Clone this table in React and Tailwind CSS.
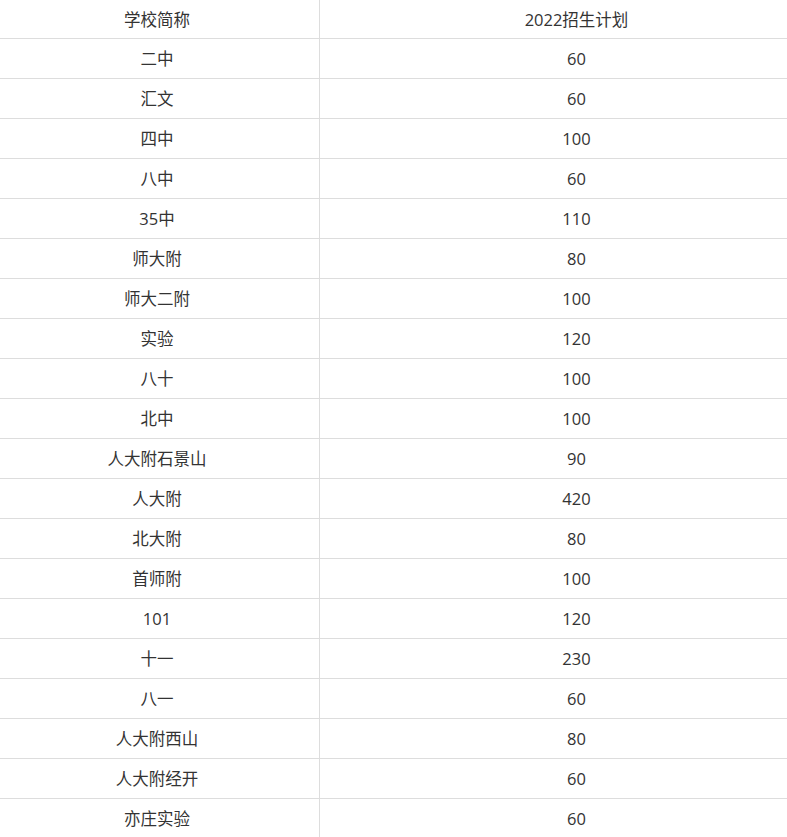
const rows = [
  ['二中', '60'],
  ['汇文', '60'],
  ['四中', '100'],
  ['八中', '60'],
  ['35中', '110'],
  ['师大附', '80'],
  ['师大二附', '100'],
  ['实验', '120'],
  ['八十', '100'],
  ['北中', '100'],
  ['人大附石景山', '90'],
  ['人大附', '420'],
  ['北大附', '80'],
  ['首师附', '100'],
  ['101', '120'],
  ['十一', '230'],
  ['八一', '60'],
  ['人大附西山', '80'],
  ['人大附经开', '60'],
  ['亦庄实验', '60'],
];

function Row({ name, plan, header }) {
  return (
    <div
      className={`grid grid-cols-[325px_1fr] border-b border-[#dddddd] ${header ? 'h-[39px]' : 'h-10'}`}
    >
      <div className="flex items-center justify-center border-r border-[#dddddd] pt-[2px]">{name}</div>
      <div className="flex items-center justify-center pt-[2px]">{plan}</div>
    </div>
  );
}

export default function App() {
  return (
    <div className="w-[787px] h-[837px] overflow-hidden bg-white">
      <div
        className="w-[838px] -ml-[5px] text-[16.5px] text-[#333333]"
        style={{ fontFamily: '"Open Sans", "Noto Sans CJK SC", sans-serif' }}
      >
        <Row name="学校简称" plan="2022招生计划" header />
        {rows.map(([name, plan]) => (
          <Row key={name} name={name} plan={plan} />
        ))}
      </div>
    </div>
  );
}
